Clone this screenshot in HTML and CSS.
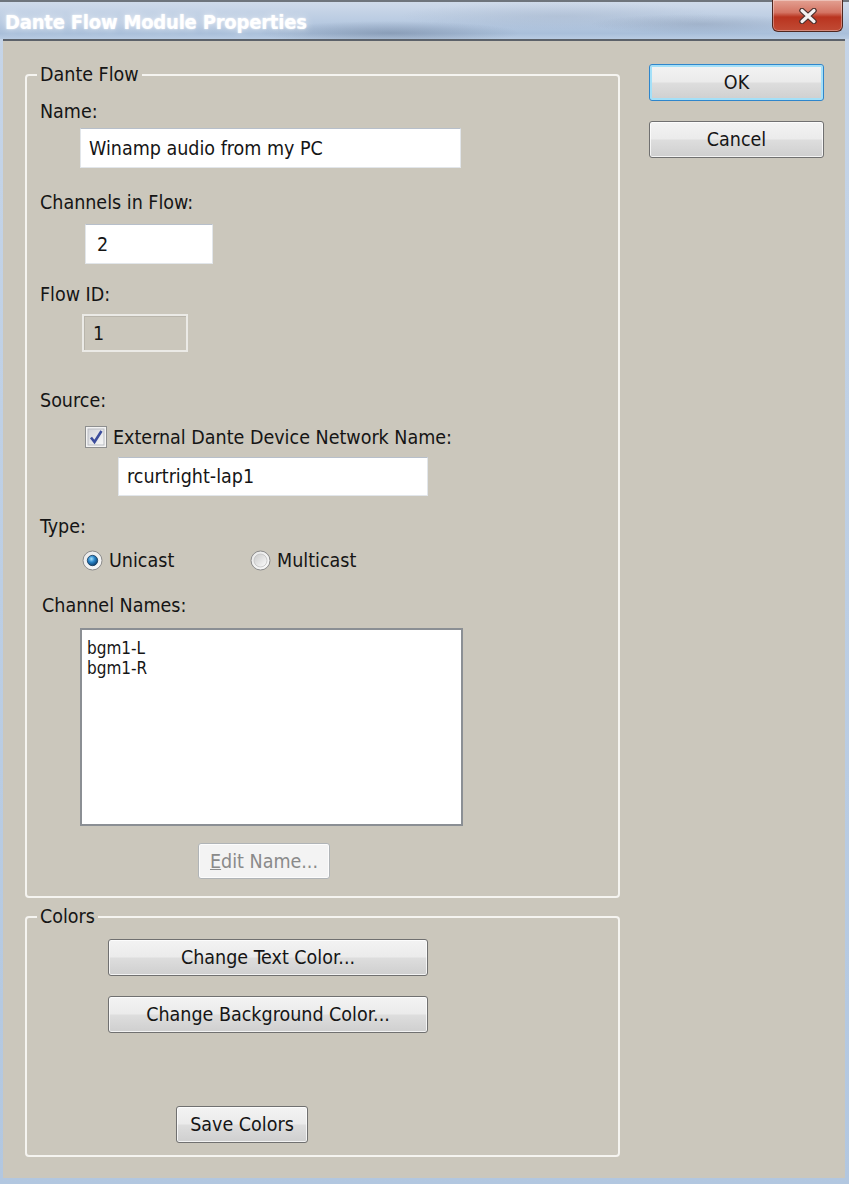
FILE: index.html
```html
<!DOCTYPE html>
<html>
<head>
<meta charset="utf-8">
<title>Dante Flow Module Properties</title>
<link rel="stylesheet" href="styles.css">
</head>
<body>
<div class="window">
	<div class="titlebar">
		<span class="title">Dante Flow Module Properties</span>
		<div class="close">
			<svg width="18" height="16" viewBox="0 0 18 16">
				<path d="M3 2.5 L15 13.5 M15 2.5 L3 13.5" stroke="#4a2f2c" stroke-width="5.5" stroke-linecap="round" fill="none"/>
				<path d="M3 2.5 L15 13.5 M15 2.5 L3 13.5" stroke="#f4f1f1" stroke-width="3.2" stroke-linecap="round" fill="none"/>
			</svg>
		</div>
	</div>

	<div class="client">
		<div class="groups">
			<fieldset class="group flow">
				<legend>Dante Flow</legend>

				<div class="label">Name:</div>
				<div class="field name-field">Winamp audio from my PC</div>

				<div class="label gap-lg">Channels in Flow:</div>
				<div class="field count-field">2</div>

				<div class="label gap-md">Flow ID:</div>
				<div class="field id-field">1</div>

				<div class="label source-label">Source:</div>
				<div class="check-row">
					<svg class="checkbox" width="22" height="22" viewBox="0 0 22 22">
						<defs>
							<linearGradient id="cbg" x1="0" y1="0" x2="1" y2="1">
								<stop offset="0" stop-color="#d2d4d9"/>
								<stop offset="1" stop-color="#f8f8f8"/>
							</linearGradient>
						</defs>
						<rect x="0.5" y="0.5" width="21" height="21" fill="#f4f4f4" stroke="#8e8f8f"/>
						<rect x="3" y="3" width="16" height="16" fill="url(#cbg)" stroke="#b9bcc2"/>
						<path d="M6 11.5 L9.5 16 L16.5 5" stroke="#3c4d9c" stroke-width="2.6" fill="none"/>
					</svg>
					<span>External Dante Device Network Name:</span>
				</div>
				<div class="field device-field">rcurtright-lap1</div>

				<div class="label gap-md">Type:</div>
				<div class="radio-row">
					<div class="radio-opt first">
						<svg width="21" height="21" viewBox="0 0 21 21">
							<defs>
								<linearGradient id="rring" x1="0" y1="0" x2="1" y2="1">
									<stop offset="0" stop-color="#e8e8e8"/>
									<stop offset="1" stop-color="#fbfbfb"/>
								</linearGradient>
								<radialGradient id="rdot" cx="0.4" cy="0.35" r="0.7">
									<stop offset="0" stop-color="#a6e3ff"/>
									<stop offset="0.45" stop-color="#2a85c9"/>
									<stop offset="1" stop-color="#0b3a66"/>
								</radialGradient>
								<linearGradient id="rempty" x1="0" y1="0" x2="1" y2="1">
									<stop offset="0" stop-color="#c9c9c9"/>
									<stop offset="1" stop-color="#fdfdfd"/>
								</linearGradient>
							</defs>
							<circle cx="10.5" cy="10.5" r="9.5" fill="url(#rring)" stroke="#8b8b8b"/>
							<circle cx="10.5" cy="10.5" r="5.2" fill="url(#rdot)" stroke="#163a5c" stroke-width="0.8"/>
						</svg>
						<span>Unicast</span>
					</div>
					<div class="radio-opt">
						<svg width="21" height="21" viewBox="0 0 21 21">
							<circle cx="10.5" cy="10.5" r="9.5" fill="url(#rring)" stroke="#8b8b8b"/>
							<circle cx="10.5" cy="10.5" r="6.5" fill="url(#rempty)" stroke="#c2c2c2" stroke-width="0.8"/>
						</svg>
						<span>Multicast</span>
					</div>
				</div>

				<div class="label names-label">Channel Names:</div>
				<div class="listbox">
					<div>bgm1-L</div>
					<div>bgm1-R</div>
				</div>

				<button class="btn disabled edit-btn"><u>E</u>dit Name...</button>
			</fieldset>

			<fieldset class="group colors">
				<legend>Colors</legend>
				<button class="btn wide-btn">Change Text Color...</button>
				<button class="btn wide-btn second">Change Background Color...</button>
				<button class="btn save-btn">Save Colors</button>
			</fieldset>
		</div>

		<div class="actions">
			<button class="btn default">OK</button>
			<button class="btn">Cancel</button>
		</div>
	</div>
</div>
</body>
</html>
```

FILE: styles.css
```css
html {

	font-family: "DejaVu Sans Condensed", "DejaVu Sans", sans-serif;
	font-stretch: condensed;
	color: #151515;
}
body {

	margin: 0;
	font-size: 19.5px;
	background: #bccee4;
}
.window {

	width: 849px;
	height: 1184px;
	display: flex;
	flex-direction: column;
	background: linear-gradient(180deg, #c6d5e8, #b2c7e0);
}

/* title bar */
.titlebar {

	height: 37px;
	border-top: 2px solid #6e747c;
	display: flex;
	justify-content: space-between;
	align-items: flex-start;
	background:
		radial-gradient(ellipse 130px 12px at 390px 31px, rgba(80, 96, 122, .35), transparent),
		radial-gradient(ellipse 110px 10px at 700px 22px, rgba(90, 104, 128, .22), transparent),
		radial-gradient(ellipse 160px 14px at 560px 14px, rgba(120, 136, 160, .18), transparent),
		linear-gradient(180deg, #cfdaea 0%, #bccde3 45%, #a9bfda 85%, #b8cbe2 100%);
}
.title {

	padding: 8px 0 0 5px;
	font-weight: bold;
	font-size: 20px;
	color: #fff;
	letter-spacing: -0.2px;
	text-shadow: 0 0 2px rgba(255, 255, 255, .8), 0 0 8px rgba(255, 255, 255, .7);
}
.close {

	box-sizing: border-box;
	width: 71px;
	height: 32px;
	margin: -2px 6px 0 0;
	border: 1px solid #4f2720;
	border-top: 0;
	border-radius: 0 0 6px 6px;
	display: flex;
	align-items: center;
	justify-content: center;
	background: linear-gradient(180deg, #e3a092 0%, #d47564 40%, #b9341f 55%, #c14b35 100%);
	box-shadow: inset 0 0 0 1px rgba(255, 255, 255, .35);
}

/* dialog area */
.client {

	flex: 1;
	margin: 0 4px 6px 3px;
	padding: 0 21px 0 22px;
	display: flex;
	gap: 29px;
	background: #cbc7bc;
	border-top: 2px solid #5c626a;
}
.groups {

	width: 595px;
	display: flex;
	flex-direction: column;
}
.group {

	margin: 0;
	min-width: 0;
	border: 2px solid #f5f4f0;
	border-radius: 4px;
	padding: 15px 13px 17px;
}
.group legend {

	padding: 0 3px;
	margin-left: -3px;
	line-height: 22px;
}
.flow {

	margin-top: 23px;
}
.colors {

	margin-top: 8px;
	padding-top: 11px;
	padding-bottom: 12px;
}
.label {

	line-height: 22px;
}
.gap-lg {

	margin-top: 24px;
}
.gap-md {

	margin-top: 20px;
}
.source-label {

	margin-top: 38px;
}
.names-label {

	margin: 24px 0 0 2px;
}

/* edit fields */
.field {

	box-sizing: border-box;
	display: flex;
	align-items: center;
	padding-left: 8px;
	background: #fff;
	border: 1px solid #e2e6ea;
	border-top-color: #b7bfca;
}
.name-field {

	width: 381px;
	height: 40px;
	margin: 5px 0 0 40px;
}
.count-field {

	width: 128px;
	height: 40px;
	margin: 10px 0 0 45px;
	padding-left: 11px;
}
.id-field {

	width: 106px;
	height: 38px;
	margin: 8px 0 0 42px;
	padding-left: 9px;
	background: #cbc7bc;
	border: 2px solid #ebeae6;
	box-shadow: inset 1px 1px 0 #b9b5ab;
}
.device-field {

	width: 310px;
	height: 39px;
	margin: 9px 0 0 78px;
}

/* checkbox and radios */
.check-row {

	margin: 14px 0 0 45px;
	display: flex;
	align-items: center;
	gap: 6px;
	height: 22px;
}
.radio-row {

	margin: 11px 0 0 42px;
	display: flex;
	height: 22px;
	align-items: center;
}
.radio-opt {

	display: flex;
	align-items: center;
	gap: 6px;
}
.radio-opt.first {

	width: 168px;
}
.listbox {

	box-sizing: border-box;
	width: 383px;
	height: 198px;
	margin: 11px 0 0 40px;
	padding: 8px 5px;
	font-size: 17px;
	line-height: 20px;
	background: #fff;
	border: 2px solid #8b8f94;
}

/* buttons */
.btn {

	display: block;
	box-sizing: border-box;
	height: 37px;
	padding: 0;
	font: inherit;
	color: #151515;
	text-align: center;
	border: 1px solid #707070;
	border-radius: 3px;
	background: linear-gradient(180deg, #f3f3f3 0%, #ebebeb 48%, #dddddd 52%, #cfcfcf 100%);
	box-shadow: inset 0 0 0 1px rgba(255, 255, 255, .75);
}
.btn.disabled {

	color: #8a8a8a;
	border-color: #b0b4b7;
	background: #f3f3f3;
}
.edit-btn {

	width: 132px;
	height: 36px;
	margin: 17px 0 0 158px;
}
.wide-btn {

	width: 320px;
	margin-left: 68px;
}
.wide-btn.second {

	margin-top: 20px;
}
.save-btn {

	width: 132px;
	margin: 73px 0 0 136px;
}
.actions {

	width: 175px;
	padding-top: 23px;
	display: flex;
	flex-direction: column;
	gap: 20px;
}
.btn.default {

	border-color: #2f86cc;
	box-shadow: inset 0 0 0 2px #a4e0f8;
}
```
